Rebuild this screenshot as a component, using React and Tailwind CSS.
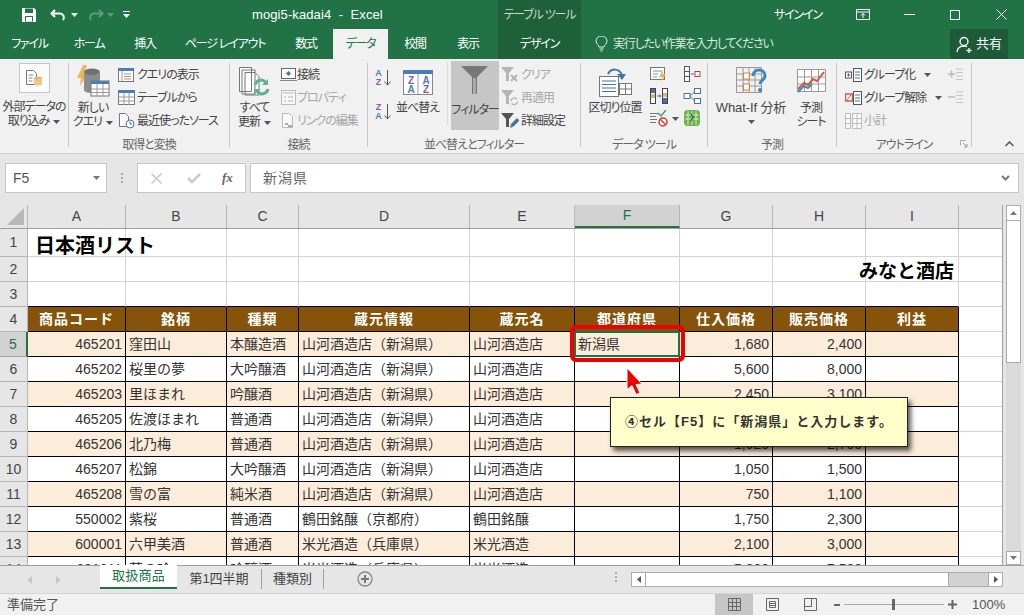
const COLS = [98, 101, 72, 171, 105, 105, 93, 93, 93]
const COLNAMES = ['A', 'B', 'C', 'D', 'E', 'F', 'G', 'H', 'I']
const HEAD = ['商品コード', '銘柄', '種類', '蔵元情報', '蔵元名', '都道府県', '仕入価格', '販売価格', '利益']
const SR = '山河酒造店（新潟県）'
const ROWS = [
  ['465201', '窪田山', '本醸造酒', SR, '山河酒造店', '新潟県', '1,680', '2,400'],
  ['465202', '桜里の夢', '大吟醸酒', SR, '山河酒造店', '', '5,600', '8,000'],
  ['465203', '里ほまれ', '吟醸酒', SR, '山河酒造店', '', '2,450', '3,100'],
  ['465205', '佐渡ほまれ', '普通酒', SR, '山河酒造店', '', '', ''],
  ['465206', '北乃梅', '普通酒', SR, '山河酒造店', '', '1,920', '2,700'],
  ['465207', '松錦', '大吟醸酒', SR, '山河酒造店', '', '1,050', '1,500'],
  ['465208', '雪の富', '純米酒', SR, '山河酒造店', '', '750', '1,100'],
  ['550002', '紫桜', '普通酒', '鶴田銘醸（京都府）', '鶴田銘醸', '', '1,750', '2,300'],
  ['600001', '六甲美酒', '普通酒', '米光酒造（兵庫県）', '米光酒造', '', '2,100', '3,000'],
  ['601011', '萌の吟', '吟醸酒', '米光酒造（兵庫県）', '米光酒造', '', '5,200', '7,500'],
]
const GRID = 'grid grid-cols-[98px_101px_72px_171px_105px_105px_93px_93px_93px_44px]'
const UI = "[font-feature-settings:'palt'] tracking-[-1px]"
const TAB = "[font-feature-settings:'palt'] tracking-[-1.2px]"

function Caret({ className = '', color = '#555' }) {
  return (
    <svg width="7" height="4" viewBox="0 0 7 4" className={className}>
      <path d="M0 0h7L3.5 4z" fill={color} />
    </svg>
  )
}

function Big({ w, icon, lines, caret }) {
  return (
    <div className="flex flex-col items-center shrink-0" style={{ width: w }}>
      <div className="h-[36px] flex items-center justify-center mt-[2px]">{icon}</div>
      <div className="leading-[14px] text-center mt-[1px] whitespace-nowrap">
        {lines.map((l, i) => <div key={i}>{l}{caret && i === lines.length - 1 && <Caret className="inline ml-1 align-middle" />}</div>)}
      </div>
    </div>
  )
}

function Small({ icon, text, off, caret, gap = 2 }) {
  return (
    <div className={`h-[23px] flex items-center whitespace-nowrap ${off ? 'text-[#a6a6a6]' : ''}`}>
      <span className="w-[18px] flex justify-center shrink-0">{icon}</span>
      <span style={{ marginLeft: gap }}>{text}</span>
      {caret && <Caret className="ml-[9px]" />}
    </div>
  )
}

function Group({ w, label, children, launcher }) {
  return (
    <div className="relative h-[84px] flex flex-col border-r border-[#c6c6c6] shrink-0" style={{ width: w }}>
      <div className="h-[73px] flex -mt-[1px] shrink-0">{children}</div>
      <div className="text-center leading-[14px] text-[#666] mt-[3px] shrink-0">{label}</div>
      {launcher && (
        <svg width="8" height="8" viewBox="0 0 8 8" className="absolute right-[3px] -bottom-[1px]">
          <path d="M.5.5h5M.5.5v5" stroke="#aaa" /><path d="M3 3l4 4M7 4v3H4" stroke="#999" fill="none" />
        </svg>
      )}
    </div>
  )
}

const TableIcon = () => (
  <svg width="17" height="15" viewBox="0 0 17 15">
    <rect x=".5" y=".5" width="16" height="14" fill="#fff" stroke="#777" />
    <rect x="0" y="0" width="17" height="3" fill="#4a7ebb" />
    <path d="M.5 7h16M.5 11h16M6 3v12M11 3v12" stroke="#999" fill="none" />
  </svg>
)
// small funnels, each with its own badge in the lower right corner
const FunnelSm = ({ color = '#b5b5b5', children }) => (
  <svg width="18" height="17" viewBox="0 0 18 17">
    <path d="M0 1h13L8 7v8H5V7z" fill={color} />
    {children}
  </svg>
)

function SheetRow({ num, h = 25, selected, children }) {
  return (
    <div className="flex" style={{ height: h }}>
      <div className={`w-[28px] shrink-0 flex items-center justify-center border-b border-r text-[#444] ${selected ? 'bg-[#d2d2d2] border-b-[#a0a0a0] border-r-[#217346] border-r-2 text-[#217346]' : 'bg-[#e6e6e6] border-[#b5b5b5]'}`}>{num}</div>
      <div className={`${GRID} flex-1`}>{children}</div>
    </div>
  )
}

function PlainRow({ num, h, lastBlack, left, right }) {
  return (
    <SheetRow num={num} h={h}>
      {COLS.map((_, i) => (
        <div key={i} className={`relative border-r border-r-[#d4d4d4] border-b ${lastBlack ? 'border-b-black' : 'border-b-[#d4d4d4]'}`}>
          {i === 0 && left && <span className="absolute left-[7px] top-[3px] text-[20px] leading-[28px] font-bold text-black whitespace-nowrap">{left}</span>}
          {i === 8 && right && <span className="absolute right-[4px] top-[3px] text-[19px] leading-[24px] font-bold text-black whitespace-nowrap">{right}</span>}
        </div>
      ))}
      <div className="border-b border-[#d4d4d4]" />
    </SheetRow>
  )
}

export default function App() {
  return (
    <div className="relative w-[1024px] h-[615px] overflow-hidden bg-[#e6e6e6] font-['Liberation_Sans','Noto_Sans_CJK_JP',sans-serif] text-[12px] text-[#444]">
      {/* title bar */}
      <div className="h-[29px] bg-[#217346] flex items-center text-white relative">
        <div className="w-[498px] flex items-center shrink-0 h-full relative">
          <svg width="16" height="16" viewBox="0 0 16 16" className="ml-[21px]">
            <path d="M1 1h12l2 2v12H1z" fill="#fff" />
            <rect x="4" y="1.5" width="8" height="4.5" fill="#217346" />
            <rect x="4" y="9" width="8" height="5.5" fill="#217346" />
            <rect x="5" y="10" width="6" height="4.5" fill="#fff" />
          </svg>
          <svg width="18" height="14" viewBox="0 0 18 14" className="ml-[13px]">
            <path d="M5 2L1.5 5.5 5 9M2 5.5h8a4 4 0 0 1 3 6.5" fill="none" stroke="#fff" strokeWidth="2" />
          </svg>
          <Caret className="ml-[3px]" color="#dfe" />
          <svg width="18" height="14" viewBox="0 0 18 14" className="ml-[8px]">
            <path d="M13 2l3.5 3.5L13 9M16 5.5H8a4 4 0 0 0-3 6.5" fill="none" stroke="#5f9c7d" strokeWidth="2" />
          </svg>
          <Caret className="ml-[3px]" color="#5f9c7d" />
          <svg width="7" height="7" viewBox="0 0 7 7" className="ml-[9px]">
            <path d="M0 .5h7" stroke="#fff" /><path d="M0 3h7L3.5 7z" fill="#fff" />
          </svg>
          <span className="ml-[122px] text-[13px] tracking-[0.1px] whitespace-pre">mogi5-kadai4  -  Excel</span>
        </div>
        <div className="w-[83px] h-full bg-[#1e6038] shrink-0 text-[#c4d8cc] flex items-center justify-center whitespace-nowrap">
          <span className={TAB}>テーブル ツール</span>
        </div>
        <span className={`ml-[193px] w-[60px] whitespace-nowrap ${TAB}`}>サインイン</span>
        <svg width="14" height="11" viewBox="0 0 14 11" className="ml-[22px]">
          <path d="M.5.5h13v10H.5zM.5 3h13M7 9V4.5M5 6.5l2-2 2 2" fill="none" stroke="#fff" />
        </svg>
        <div className="ml-[34px] w-[11px] h-px bg-white" />
        <div className="ml-[35px] w-[10px] h-[10px] border border-white" />
        <svg width="11" height="11" viewBox="0 0 11 11" className="ml-[36px]">
          <path d="M.5.5l10 10M10.5.5l-10 10" stroke="#fff" fill="none" />
        </svg>
      </div>

      {/* tabs */}
      <div className="h-[30px] bg-[#217346] flex text-white">
        {[['ファイル', 59], ['ホーム', 60], ['挿入', 52], ['ページ レイアウト', 108], ['数式', 54]].map(([t, w]) => (
          <div key={t} className={`flex items-center justify-center whitespace-nowrap ${TAB}`} style={{ width: w }}>{t}</div>
        ))}
        <div className={`w-[55px] bg-[#f1f1f1] text-[#217346] flex items-center justify-center ${TAB}`}>データ</div>
        <div className={`w-[54px] flex items-center justify-center ${TAB}`}>校閲</div>
        <div className={`w-[52px] flex items-center justify-center ${TAB}`}>表示</div>
        <div className="w-[4px]" />
        <div className={`w-[83px] bg-[#1e6038] flex items-center justify-center ${TAB}`}>デザイン</div>
        <div className="w-[14px]" />
        <svg width="13" height="16" viewBox="0 0 13 16" className="self-center">
          <path d="M4 11c0-2-3-3-3-6a5.5 5 0 0 1 11 0c0 3-3 4-3 6zM4.5 13h4M5.500 15h2" fill="none" stroke="#e8f0ea" />
        </svg>
        <div className={`ml-[5px] w-[337px] flex items-center whitespace-nowrap text-[#dbe8e0] ${TAB}`}>実行したい作業を入力してください</div>
        <div className="w-[58px] bg-[#1c5a38] flex items-center justify-center">
          <svg width="17" height="17" viewBox="0 0 17 17">
            <circle cx="8" cy="5.500" r="4" fill="none" stroke="#fff" strokeWidth="1.300" />
            <path d="M1 16c.5-4 3-6 7-6 1 0 2 .2 3 .6M13 12v5M10.500 14.500h5" fill="none" stroke="#fff" strokeWidth="1.300" />
          </svg>
          <span className="ml-[3px] text-[13px]">共有</span>
        </div>
      </div>

      {/* ribbon */}
      <div className={`relative h-[95px] bg-[#f1f1f1] border-b border-[#d2d2d2] flex pt-[4px] ${UI}`}>
        <Group w={69} label="">
          <div className="w-full flex flex-col items-center">
            <div className="mt-[1px] w-[31px] h-[30px] bg-[#fbfbfb] border border-[#c6c6c6] flex items-center justify-center">
              <svg width="18" height="18" viewBox="0 0 18 18">
                <path d="M1.500 1.500h7l3 3v11h-10z" fill="#fff" stroke="#777" />
                <path d="M3.500 6h5M3.500 9h4M3.500 12h4" stroke="#888" />
                <ellipse cx="13" cy="9" rx="4" ry="1.500" fill="#e6b56d" />
                <path d="M9 9v6c0 2 8 2 8 0V9c0 2-8 2-8 0z" fill="#eec78c" />
              </svg>
            </div>
            <div className="leading-[14px] mt-[7px] text-center whitespace-nowrap">外部データの<br />取り込み<Caret className="inline ml-1 align-middle" /></div>
          </div>
        </Group>
        <Group w={161} label="取得と変換">
          <Big w={48} lines={['新しい', 'クエリ']} caret icon={
            <svg width="33" height="34" viewBox="0 0 33 34">
              <path d="M6 0L0 13h4l-1 8 8-13H7l3-8z" fill="#eab65c" />
              <ellipse cx="15" cy="7" rx="8" ry="3.500" fill="#707070" />
              <path d="M7 7v18c0 4 16 4 16 0V7c0 4-16 4-16 0z" fill="#8c8c8c" />
              <rect x="14" y="16" width="18" height="15" fill="#fff" stroke="#777" />
              <rect x="14" y="16" width="18" height="3" fill="#4a7ebb" />
              <path d="M14 24h18M14 27.500h18M20 19v12M26 19v12" stroke="#999" />
            </svg>
          } />
          <div className="pt-[1px]">
            <Small text="クエリの表示" icon={
              <svg width="16" height="14" viewBox="0 0 16 14"><rect x=".5" y=".5" width="15" height="13" fill="#fff" stroke="#777" /><rect width="16" height="3" fill="#4a7ebb" /><path d="M6 6h7M6 8.500h7M6 11h7M4 3v10" stroke="#999" /></svg>
            } />
            <Small text="テーブルから" icon={<TableIcon />} />
            <Small text="最近使ったソース" icon={
              <svg width="17" height="16" viewBox="0 0 17 16"><path d="M1.500.5h6l3 3v10h-9z" fill="#fff" stroke="#777" /><circle cx="12" cy="11" r="4" fill="#fff" stroke="#3f74ad" /><path d="M12 8.500V11h2" stroke="#3f74ad" fill="none" /></svg>
            } />
          </div>
        </Group>
        <Group w={138} label="接続">
          <Big w={49} lines={['すべて', '更新']} caret icon={
            <svg width="31" height="31" viewBox="0 0 31 31">
              <path d="M.5.500h12v24H.5zM3 3h13v24H3zM6 5.500h10l4 4V28H6z" fill="#fff" stroke="#777" />
              <path d="M16 18a6 6 0 0 1 11-2M29 22a6 6 0 0 1-11 2" fill="none" stroke="#5fb28f" strokeWidth="3" />
              <path d="M29 12v6h-6M15 28v-6h6" fill="#5fb28f" />
            </svg>
          } />
          <div className="pt-[1px]">
            <Small text="接続" gap={0} icon={
              <svg width="17" height="14" viewBox="0 0 17 14"><rect x="1.500" y=".5" width="14" height="10" fill="#fff" stroke="#666" /><path d="M0 12.500h17" stroke="#888" /><path d="M8.500 3l2.500 2.500L8.500 8 6 5.500z" fill="#3f74ad" /></svg>
            } />
            <Small text="プロパティ" off gap={0} icon={
              <svg width="15" height="15" viewBox="0 0 15 15"><rect x=".5" y=".5" width="14" height="14" fill="#f7f7f7" stroke="#bbb" /><path d="M2 3h11M3 7h2M3 11h2M7 7h5M7 11h5" stroke="#b5b5b5" /></svg>
            } />
            <Small text="リンクの編集" off gap={0} icon={
              <svg width="14" height="16" viewBox="0 0 14 16"><path d="M1.500.5h7l3 3v11h-10z" fill="#fafafa" stroke="#bbb" /><path d="M4 11h3M7 13h4" stroke="#aaa" strokeWidth="2" /></svg>
            } />
          </div>
        </Group>
        <Group w={213} label="並べ替えとフィルター">
          <div className="w-[21px] ml-[6px] pt-[2px] flex flex-col gap-[7px] text-[9px] leading-[9px] tracking-normal font-bold">
            {[['A', 'Z', '#4a7ebb', '#8a58a8'], ['Z', 'A', '#8a58a8', '#4a7ebb']].map(([a, b, c, d]) => (
              <div key={a} className="flex items-center h-[27px]">
                <div className="text-center w-[9px]"><div style={{ color: c }}>{a}</div><div style={{ color: d }}>{b}</div></div>
                <svg width="7" height="16" viewBox="0 0 7 16" className="ml-[1px]"><path d="M3.500 0v15M.5 11.500l3 3.500 3-3.500" fill="none" stroke="#555" /></svg>
              </div>
            ))}
          </div>
          <Big w={45} lines={['並べ替え']} icon={
            <svg width="30" height="25" viewBox="0 0 30 25">
              <rect x=".5" y=".5" width="29" height="24" fill="#fff" stroke="#888" />
              <rect width="30" height="4" fill="#4a7ebb" />
              <path d="M15 4v20" stroke="#999" />
              <text x="7.500" y="14" textAnchor="middle" fontSize="10" fontWeight="700" fill="#8a58a8">Z</text>
              <text x="22.500" y="14" textAnchor="middle" fontSize="10" fontWeight="700" fill="#4a7ebb">A</text>
              <text x="7.500" y="23" textAnchor="middle" fontSize="10" fontWeight="700" fill="#4a7ebb">A</text>
              <text x="22.500" y="23" textAnchor="middle" fontSize="10" fontWeight="700" fill="#8a58a8">Z</text>
            </svg>
          } />
          <div className="ml-[7px] w-px h-[63px] bg-[#dcdcdc]" />
          <div className="ml-[3px] w-[48px] h-[69px] -mt-[1px] bg-[#c6c6c6] flex flex-col items-center">
            <svg width="30" height="30" viewBox="0 0 30 30" className="mt-[4px]"><path d="M1 1h27L17 12v17h-5V12z" fill="#777" /><path d="M13 13h3v16h-3z" fill="#a9a9a9" /></svg>
            <div className="mt-[6px] whitespace-nowrap">フィルター</div>
          </div>
          <div className="ml-[2px] pt-[1px]">
            <Small text="クリア" off icon={
              <FunnelSm><path d="M10 9l6 6M16 9l-6 6" stroke="#b5b5b5" strokeWidth="2" /></FunnelSm>
            } />
            <Small text="再適用" off icon={
              <FunnelSm><path d="M10 12a3.500 3.500 0 0 1 6-2M16.500 12.500a3.500 3.500 0 0 1-6 2" fill="none" stroke="#b5b5b5" strokeWidth="1.500" /></FunnelSm>
            } />
            <Small text="詳細設定" icon={
              <FunnelSm color="#555"><path d="M9 16l1-4 6-6 2.500 2.500-6 6z" fill="#3f74ad" /></FunnelSm>
            } />
          </div>
        </Group>
        <Group w={127} label="データ ツール">
          <Big w={68} lines={['区切り位置']} icon={
            <svg width="33" height="29" viewBox="0 0 33 29">
              <rect x=".5" y="8.500" width="19" height="20" fill="#fff" stroke="#777" />
              <path d="M3 13h14M3 16.500h14M3 20h14M3 23.500h14" stroke="#3f74ad" />
              <rect x="20.500" y="15.500" width="12" height="11" fill="#fff" stroke="#777" />
              <path d="M20.500 21h12M26.500 15.500v11" stroke="#777" />
              <path d="M9 6c3-6 11-6 14 1" fill="none" stroke="#3f74ad" strokeWidth="2" />
              <path d="M18 6h9l-4 6z" fill="#3f74ad" />
            </svg>
          } />
          <div className="w-[20px] pt-[3px] flex flex-col items-center gap-[4px]">
            <svg width="18" height="18" viewBox="0 0 18 18"><rect x=".5" y="2.500" width="14" height="12" fill="#fff" stroke="#777" /><path d="M3 6h9M3 9h5M3 12h4" stroke="#6aa57c" /><path d="M13 5l-4 7h3l-1 5 5-8h-3z" fill="#eab65c" /></svg>
            <svg width="18" height="18" viewBox="0 0 18 18"><rect x=".5" y="1.500" width="5" height="15" fill="#fff" stroke="#444" /><rect x="12.500" y="1.500" width="5" height="15" fill="#fff" stroke="#444" /><path d="M1 2h4v4H1zM13 11h4v5h-4z" fill="#3f74ad" /><path d="M1 7h4v4H1zM13 6h4v4h-4z" fill="#e6b56d" /><path d="M7 9h4M9.500 7.500L11 9l-1.500 1.500" stroke="#3f74ad" fill="none" /></svg>
            <svg width="18" height="18" viewBox="0 0 18 18"><path d="M0 4.500h9M0 7.500h6M0 10.500h7M0 13.500h6" stroke="#777" /><path d="M8 4l3 3 5-6" stroke="#4c9a6e" strokeWidth="1.500" fill="none" /><circle cx="13" cy="13" r="4" fill="#fff" stroke="#c9402a" strokeWidth="1.500" /><path d="M10.500 10.500l5 5" stroke="#c9402a" strokeWidth="1.500" /></svg>
          </div>
          <Caret className="mt-[55px] ml-[3px]" />
          <div className="ml-[4px] pt-[3px] flex flex-col items-center gap-[4px]">
            <svg width="18" height="18" viewBox="0 0 18 18"><rect x="1.500" y="1.500" width="5" height="15" fill="#fff" stroke="#555" /><path d="M2 6.500h4M2 11.500h4" stroke="#555" /><path d="M8 9h3" stroke="#3f74ad" /><rect x="12" y="6.500" width="5" height="5" fill="#fff" stroke="#c9402a" /></svg>
            <svg width="18" height="18" viewBox="0 0 18 18"><rect x="1" y="6.500" width="6" height="5" fill="#fff" stroke="#3f74ad" /><rect x="11.500" y="1.500" width="6" height="5" fill="#fff" stroke="#3f74ad" /><rect x="11.500" y="11.500" width="6" height="5" fill="#fff" stroke="#3f74ad" /><path d="M7 9l4.500-4M7 9l4.500 5" stroke="#777" /></svg>
            <svg width="18" height="18" viewBox="0 0 18 18"><rect x="1" y="1" width="16" height="16" rx="4" fill="#6bb04a" /><path d="M5 2v14M9 2v14M13 2v14M2 6h14M2 10h14" stroke="#d8eccd" /><path d="M8 5l2 3-2 4" stroke="#2f6f2a" strokeWidth="1.500" fill="none" /></svg>
          </div>
        </Group>
        <Group w={129} label="予測">
          <div className="relative w-[86px] shrink-0 flex flex-col items-center pt-[3px]">
            <svg width="31" height="27" viewBox="0 0 31 27" className="mt-[2px]">
              <path d="M.5.500h25v25H.5zM.5 7h25M.5 13h25M.5 19h25M7 .5v25M13 .5v25M19 .5v25" fill="none" stroke="#999" />
              <rect x="7.500" y="6" width="6" height="6" fill="#fff" stroke="#e07b3a" />
              <rect x="7.500" y="17" width="6" height="6" fill="#fff" stroke="#e07b3a" />
              <path d="M17 9c0-8 12-8 12 0 0 4-5 4-5 8" fill="none" stroke="#3f84c0" strokeWidth="3" />
              <circle cx="24" cy="23" r="2" fill="#3f84c0" />
            </svg>
            <div className="mt-[7px] leading-[14px] text-[13px] whitespace-nowrap tracking-[-0.1px]">What-If 分析</div>
            <Caret className="mt-[5px]" />
          </div>
          <Big w={34} lines={['予測', 'シート']} icon={
            <svg width="29" height="26" viewBox="0 0 29 26">
              <path d="M.5.500h28v22H.5zM.5 8h28M.5 15h28M7.500 .5v22M14.500 .5v22M21.500 .5v22" fill="#fff" stroke="#999" />
              <path d="M1 20l6-6 4 2 5-6 4 2 7-9" fill="none" stroke="#d9553a" strokeWidth="2" />
              <path d="M1 23l6-6 4 2 4-4" fill="none" stroke="#3f84c0" strokeWidth="2" />
            </svg>
          } />
        </Group>
        <Group w={135} label="アウトライン" launcher>
          <div className="ml-[7px] pt-[1px] w-[104px]">
            <Small text="グループ化" caret icon={
              <svg width="17" height="14" viewBox="0 0 17 14"><rect x=".5" y="4" width="6" height="6" fill="#fff" stroke="#555" /><path d="M2 7h3M3.500 5.500v3" stroke="#555" /><rect x="8.500" y=".5" width="8" height="13" fill="#fff" stroke="#555" /><path d="M10 4h5M10 7h5M10 10h5" stroke="#3f74ad" /></svg>
            } />
            <Small text="グループ解除" caret icon={
              <svg width="17" height="14" viewBox="0 0 17 14"><rect x=".5" y="3" width="7" height="7" fill="#fff" stroke="#d9553a" strokeWidth="1.500" /><path d="M2 9l4-5" stroke="#d9553a" /><rect x="8.500" y=".5" width="8" height="13" fill="#fff" stroke="#555" /><path d="M10 4h5M10 7h5M10 10h5" stroke="#3f74ad" /></svg>
            } />
            <Small text="小計" off icon={
              <svg width="17" height="16" viewBox="0 0 17 16"><path d="M.5.500h5v15h-5zM7.500 .5h9v15h-9zM7.500 5.500h9M7.500 10.500h9M12 .5v15M.5 5.500h5M.5 10.500h5" fill="#fafafa" stroke="#bbb" /></svg>
            } />
          </div>
          <div className="pt-[1px]">
            {['M0 6h7M3.500 2.500v7', 'M0 6h7'].map((d, i) => (
              <div key={i} className="h-[23px] flex items-center">
                <svg width="15" height="14" viewBox="0 0 15 14"><path d={d} stroke="#bbb" strokeWidth="1.500" /><path d="M8 1h7M8 4.500h7M8 8h7M8 11.500h7" stroke="#c6c6c6" /></svg>
              </div>
            ))}
          </div>
        </Group>
        <svg width="9" height="6" viewBox="0 0 9 6" className="absolute left-[1005px] top-[82px]">
          <path d="M.5 5l4-4 4 4" fill="none" stroke="#555" strokeWidth="1.500" />
        </svg>
      </div>

      {/* formula bar */}
      <div className="h-[51px] pt-[9px] pl-[5px] flex text-[14px]">
        <div className="w-[102px] h-[30px] bg-white border border-[#c6c6c6] flex items-center justify-between pl-[7px] pr-[6px] text-[#555]">
          F5<Caret color="#777" />
        </div>
        <div className="w-[30px] h-[30px] flex flex-col items-center justify-center gap-[2px]">
          {[0, 1, 2].map(i => <div key={i} className="w-[2px] h-[2px] bg-[#aaa]" />)}
        </div>
        <div className="w-[109px] h-[30px] bg-white border border-[#c6c6c6] flex items-center">
          <svg width="11" height="11" viewBox="0 0 11 11" className="ml-[13px]"><path d="M.5.5l10 10M10.500 .5l-10 10" stroke="#c9c9c9" strokeWidth="1.500" /></svg>
          <svg width="14" height="11" viewBox="0 0 14 11" className="ml-[25px]"><path d="M1 5l4 4 8-8" fill="none" stroke="#c9c9c9" strokeWidth="2.500" /></svg>
          <span className="ml-[21px] font-['Liberation_Serif',serif] italic font-bold text-[#666] text-[13px]">fx</span>
        </div>
        <div className="ml-[4px] w-[769px] h-[30px] bg-white border border-[#c6c6c6] flex items-center justify-between pl-[12px] pr-[8px] text-[#666]">
          <span className="tracking-[1px]">新潟県</span>
          <svg width="9" height="7" viewBox="0 0 9 7"><path d="M1 1l3.500 3.500L8 1" fill="none" stroke="#777" strokeWidth="2" /></svg>
        </div>
      </div>

      {/* sheet */}
      <div className="h-[360px] flex text-[14px]">
        <div className="w-[1003px] h-full overflow-hidden bg-white border-r border-[#a0a0a0] shrink-0">
          <div className="h-[24px] flex bg-[#e6e6e6] border-b border-[#a0a0a0]">
            <div className="w-[28px] shrink-0 border-r border-[#b5b5b5] relative">
              <div className="absolute right-[3px] bottom-[3px] w-0 h-0 border-l-[17px] border-l-transparent border-b-[17px] border-b-[#b8b8b8]" />
            </div>
            <div className={`${GRID} flex-1`}>
              {COLNAMES.map(c => (
                <div key={c} className={`flex items-center justify-center border-r border-[#b5b5b5] ${c === 'F' ? 'bg-[#d2d2d2] border-b-2 border-b-[#217346] text-[#217346]' : ''}`}>{c}</div>
              ))}
            </div>
          </div>
          <PlainRow num={1} h={28} left="日本酒リスト" />
          <PlainRow num={2} right="みなと酒店" />
          <PlainRow num={3} lastBlack />
          <SheetRow num={4}>
            {HEAD.map(t => (
              <div key={t} className="bg-[#85530a] text-white font-bold tracking-[1px] flex items-center justify-center border-r border-b border-black">{t}</div>
            ))}
            <div className="border-b border-[#d4d4d4]" />
          </SheetRow>
          {ROWS.map((r, idx) => (
            <SheetRow key={r[0]} num={idx + 5} selected={idx === 0}>
              {COLS.map((_, i) => {
                const numeric = i === 0 || i >= 6
                return (
                  <div key={i} className={`relative flex items-center whitespace-nowrap overflow-hidden border-r border-b border-black text-[#333] ${numeric ? 'justify-end pr-[3px]' : 'pl-[3px]'} ${idx % 2 === 0 ? 'bg-[#fcedda]' : 'bg-white'}`}>
                    {r[i]}
                  </div>
                )
              })}
              <div className="border-b border-[#d4d4d4]" />
            </SheetRow>
          ))}
        </div>
        {/* vertical scrollbar */}
        <div className="ml-[3px] w-[15px] h-[360px] bg-[#dadada] flex flex-col shrink-0">
          <div className="h-[16px] bg-white border border-[#ababab] flex items-center justify-center">
            <svg width="7" height="4" viewBox="0 0 7 4"><path d="M0 4h7L3.500 0z" fill="#777" /></svg>
          </div>
          <div className="h-[142px] bg-white border-x border-b border-[#ababab]" />
          <div className="flex-1" />
          <div className="h-[14px] bg-white border border-[#ababab] flex items-center justify-center">
            <svg width="7" height="4" viewBox="0 0 7 4"><path d="M0 0h7L3.500 4z" fill="#777" /></svg>
          </div>
        </div>
      </div>

      {/* sheet tabs */}
      <div className="h-[28px] border-t border-[#a0a0a0] flex text-[13px]">
        <div className="w-[100px] flex items-center shrink-0">
          <svg width="5" height="8" viewBox="0 0 5 8" className="ml-[27px]"><path d="M5 0v8L0 4z" fill="#c6c6c6" /></svg>
          <svg width="5" height="8" viewBox="0 0 5 8" className="ml-[24px]"><path d="M0 0v8l5-4z" fill="#c6c6c6" /></svg>
        </div>
        <div className="w-[77px] h-[24px] bg-white border-b-2 border-[#217346] -mt-px flex items-center justify-center text-[#217346] tracking-[0.3px]">取扱商品</div>
        <div className="w-[85px] h-[20px] mt-[3px] border-r border-[#a0a0a0] flex items-center justify-center text-[#444]">第1四半期</div>
        <div className="w-[62px] h-[20px] mt-[3px] border-r border-[#a0a0a0] flex items-center justify-center text-[#444]">種類別</div>
        <svg width="16" height="16" viewBox="0 0 16 16" className="ml-[33px] mt-[5px]">
          <circle cx="8" cy="8" r="7" fill="none" stroke="#888" strokeWidth="1.300" />
          <path d="M8 4v8M4 8h8" stroke="#777" strokeWidth="2" />
        </svg>
        <div className="ml-[242px] mt-[6px] flex flex-col gap-[2px] h-[10px]">
          {[0, 1, 2].map(i => <div key={i} className="w-[2px] h-[2px] bg-[#aaa]" />)}
        </div>
        <div className="ml-[14px] mt-[6px] w-[372px] h-[15px] bg-[#d2d2d2] border border-[#ababab] flex">
          <div className="w-[14px] bg-white border-r border-[#ababab] flex items-center justify-center">
            <svg width="4" height="7" viewBox="0 0 4 7"><path d="M4 0v7L0 3.500z" fill="#555" /></svg>
          </div>
          <div className="w-[303px] bg-white border-r border-[#ababab]" />
          <div className="flex-1" />
          <div className="w-[14px] bg-white border-l border-[#ababab] flex items-center justify-center">
            <svg width="4" height="7" viewBox="0 0 4 7"><path d="M0 0v7l4-3.500z" fill="#555" /></svg>
          </div>
        </div>
      </div>

      {/* status bar */}
      <div className="h-[22px] bg-[#f1f1f1] border-t border-[#d4d4d4] flex items-center text-[13px] text-[#555]">
        <span className="ml-[7px] w-[708px] shrink-0">準備完了</span>
        <div className="w-[38px] h-full bg-[#c6c6c6] flex items-center justify-center">
          <svg width="13" height="13" viewBox="0 0 13 13"><path d="M.5.500h12v12H.5zM.5 4.500h12M.5 8.500h12M4.500 .5v12M8.500 .5v12" fill="none" stroke="#666" /></svg>
        </div>
        <div className="w-[38px] flex items-center justify-center">
          <svg width="13" height="13" viewBox="0 0 13 13"><path d="M.5.500h12v12H.5zM3.500 3.500h6v6h-6zM3.500 5.500h6M3.500 7.500h6" fill="none" stroke="#666" /></svg>
        </div>
        <div className="w-[38px] flex items-center justify-center">
          <svg width="13" height="13" viewBox="0 0 13 13"><path d="M.5.500h12v12H.5zM.5 8.500h7M7.500 .5v8" fill="none" stroke="#666" /></svg>
        </div>
        <div className="ml-[5px] w-[6px] h-[2px] bg-[#666]" />
        <div className="relative ml-[4px] w-[100px] h-px bg-[#aaa]">
          <div className="absolute left-[48px] -top-[5px] w-[3px] h-[11px] bg-[#666]" />
        </div>
        <svg width="9" height="9" viewBox="0 0 9 9" className="ml-[4px]"><path d="M4.500 0v9M0 4.500h9" stroke="#666" strokeWidth="2" /></svg>
        <span className="ml-[15px]">100%</span>
      </div>

      {/* overlays */}
      <div className="absolute left-[574px] top-[331px] w-[106px] h-[26px] border-2 border-[#217346]" />
      <div className="absolute left-[570px] top-[325px] w-[115px] h-[37px] border-4 border-[#f00000] rounded-[6px]" />
      <svg width="20" height="30" viewBox="0 0 20 30" className="absolute left-[625px] top-[366px]">
        <path d="M2 2l15 16-6 .5 4 8.500-4 1.500-4-9-5 4z" fill="#ee0000" stroke="#fff" strokeWidth="1" />
      </svg>
      <div className="absolute left-[610px] top-[397px] w-[298px] h-[50px] bg-[#ffffcc] border border-[#222] shadow-[3px_4px_5px_rgba(0,0,0,0.65)] flex items-center justify-center text-[13px] font-bold tracking-[1px] text-[#333] whitespace-nowrap">
        ④セル【F5】に「新潟県」と入力します。
      </div>
    </div>
  )
}
